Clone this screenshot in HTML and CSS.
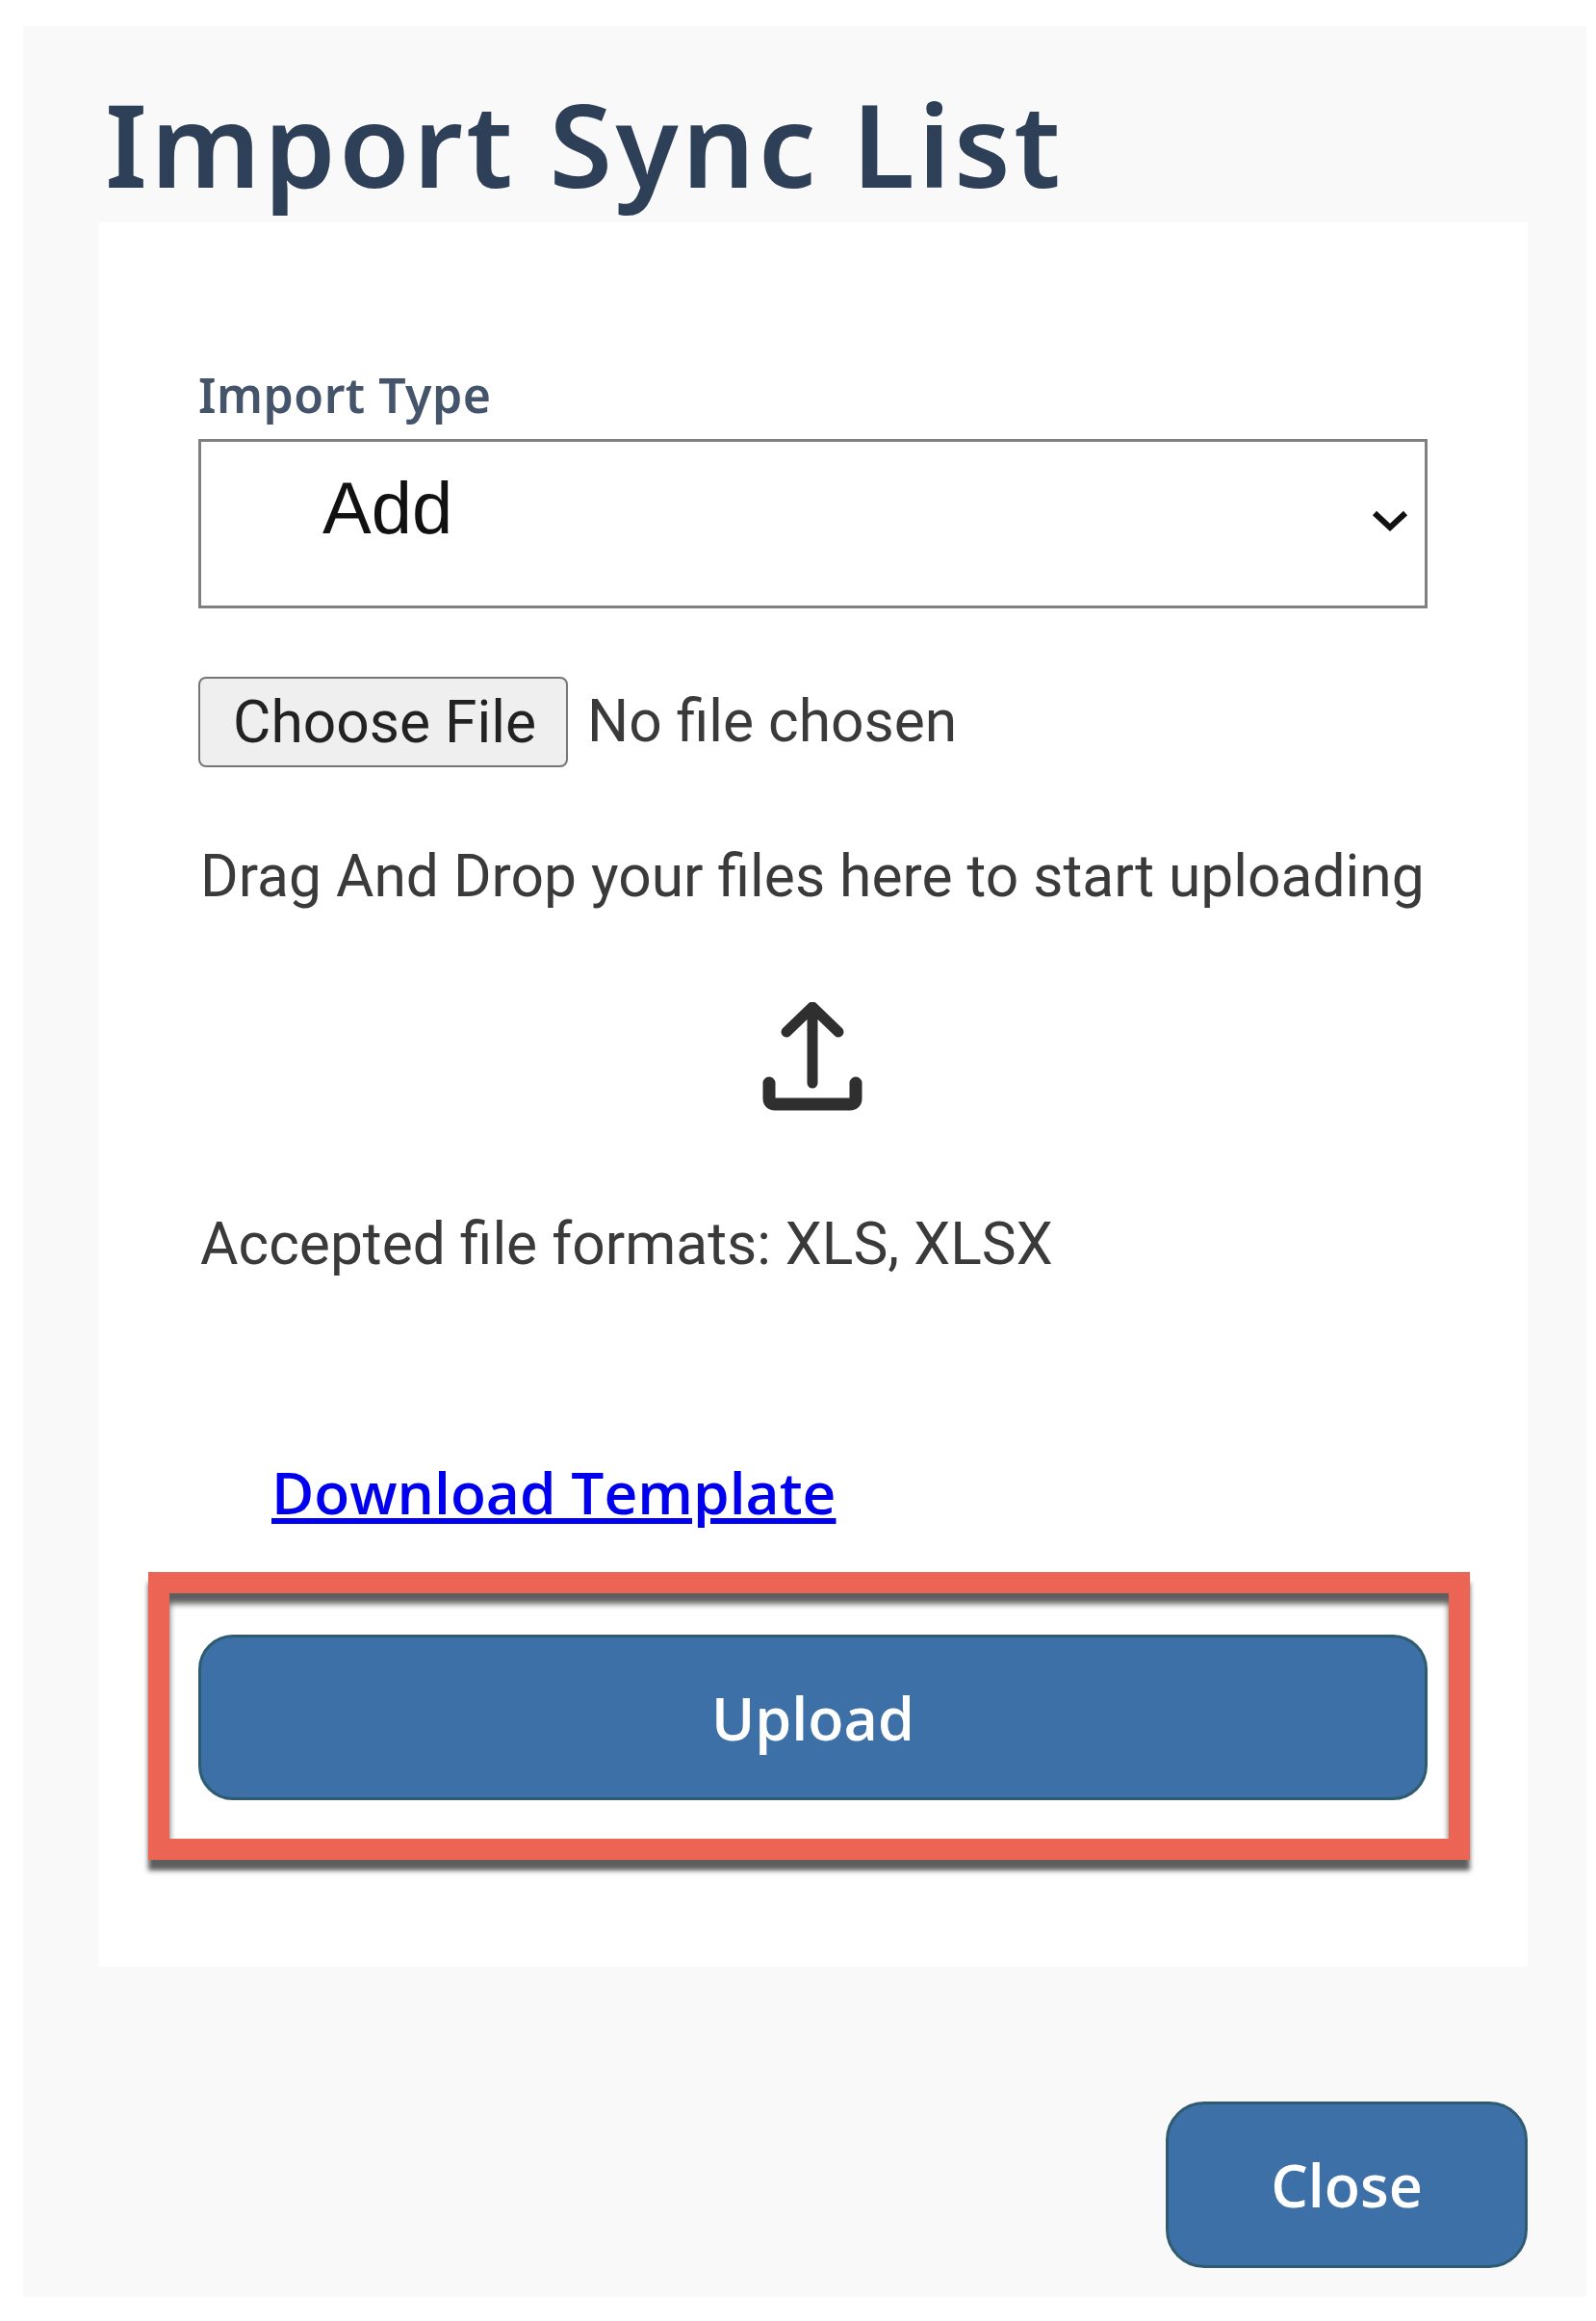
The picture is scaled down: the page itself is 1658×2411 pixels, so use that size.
FILE: index.html
```html
<!DOCTYPE html>
<html lang="en">
<head>
    <meta charset="UTF-8">
    <title>Import Sync List</title>
    <link rel="stylesheet" href="styles.css">
</head>
<body>
    <div class="panel">
        <h1 class="title">Import Sync List</h1>
        <div class="card">
            <label class="field-label">Import Type</label>
            <div class="select-box">
                <span class="select-value">Add</span>
                <svg class="chevron" viewBox="0 0 40 24" width="40" height="24">
                    <path d="M4 4 L20 19 L36 4" fill="none" stroke="#111" stroke-width="6"/>
                </svg>
            </div>
            <div class="file-row">
                <button class="file-button">Choose File</button>
                <span class="file-status">No file chosen</span>
            </div>
            <p class="drop-text">Drag And Drop your files here to start uploading</p>
            <div class="upload-icon">
                <svg viewBox="0 0 104 114" width="104" height="114">
                    <path d="M52 5 V84 M25 31 L52 5 L79 31" fill="none" stroke="#2f2f2f" stroke-width="11" stroke-linecap="round" stroke-linejoin="round"/>
                    <path d="M7 84 V100 Q7 106 13 106 H91 Q97 106 97 100 V84" fill="none" stroke="#2f2f2f" stroke-width="13" stroke-linecap="round"/>
                </svg>
            </div>
            <p class="formats-text">Accepted file formats: XLS, XLSX</p>
            <a class="template-link" href="#">Download Template</a>
            <div class="upload-wrap">
                <button class="upload-button">Upload</button>
                <div class="highlight"></div>
            </div>
        </div>
        <div class="footer">
            <button class="close-button">Close</button>
        </div>
    </div>
</body>
</html>
```

FILE: styles.css
```css
body {
    margin: 0;
    height: 2411px;
    background-color: #fff;
    overflow: hidden;
}

.panel {
    margin: 27px 10px 0 24px;
    height: 2359px;
    padding: 0 61px 0 78px;
    box-sizing: border-box;
    background-color: #f9f9f9;
}

.title {
    margin: 0;
    padding: 62px 0 0 7px;
    height: 204px;
    box-sizing: border-box;
    font-family: "Noto Sans", sans-serif;
    font-size: 119px;
    line-height: 120px;
    font-weight: 600;
    letter-spacing: 3.5px;
    color: #2e4057;
    white-space: nowrap;
}

.card {
    height: 1812px;
    box-sizing: border-box;
    padding: 156px 104px 0 104px;
    background-color: #fff;
}

.field-label {
    display: block;
    height: 69px;
    font-family: "Noto Sans", sans-serif;
    font-size: 50px;
    line-height: 46px;
    font-weight: 600;
    letter-spacing: 0.5px;
    color: #44546a;
}

.select-box {
    display: flex;
    justify-content: space-between;
    height: 176px;
    box-sizing: border-box;
    padding: 26px 16px 0 126px;
    border: 3px solid #808080;
}

.select-value {
    font-family: "Liberation Sans", sans-serif;
    font-size: 76px;
    line-height: 86px;
    color: #111;
}

.chevron {
    margin-top: 44px;
}

.file-row {
    display: flex;
    align-items: center;
    gap: 20px;
    margin-top: 71px;
}

.file-button {
    width: 384px;
    height: 94px;
    padding: 0 0 0 3px;
    font-family: "Roboto", sans-serif;
    font-size: 60.5px;
    color: #222;
    background-color: #efefef;
    border: 2px solid #767676;
    border-radius: 8px;
}

.file-status,
.drop-text,
.formats-text {
    font-family: "Roboto", sans-serif;
    font-size: 60.5px;
    line-height: 70px;
    color: #3a3a3a;
    white-space: nowrap;
}

.drop-text {
    margin: 79px 0 0 2px;
}

.upload-icon {
    display: flex;
    justify-content: center;
    margin: 95px 2px 0 0;
}

.formats-text {
    margin: 103px 0 0 2px;
}

.template-link {
    display: block;
    margin: 185px 0 0 76px;
    font-family: "Open Sans", sans-serif;
    font-size: 60.5px;
    line-height: 74px;
    font-weight: 600;
    color: #0000ee;
    white-space: nowrap;
}

.upload-wrap {
    position: relative;
    margin-top: 111px;
}

.upload-button {
    display: block;
    width: 100%;
    height: 172px;
    font-family: "Open Sans", sans-serif;
    font-size: 61px;
    font-weight: 600;
    color: #fff;
    background-color: #3e70a8;
    border: 3px solid #2f5b70;
    border-radius: 36px;
}

.highlight {
    position: absolute;
    top: -65px;
    left: -52px;
    right: -44px;
    bottom: -62px;
    border: 22px solid #ec6453;
    box-shadow: 0 11px 5px rgba(40, 40, 40, 0.75), inset 0 11px 6px rgba(40, 40, 40, 0.75);
}

.footer {
    display: flex;
    justify-content: flex-end;
    margin-top: 140px;
}

.close-button {
    width: 376px;
    height: 173px;
    font-family: "Open Sans", sans-serif;
    font-size: 61px;
    font-weight: 600;
    color: #fff;
    background-color: #3e70a8;
    border: 3px solid #2f5b70;
    border-radius: 40px;
}
```
